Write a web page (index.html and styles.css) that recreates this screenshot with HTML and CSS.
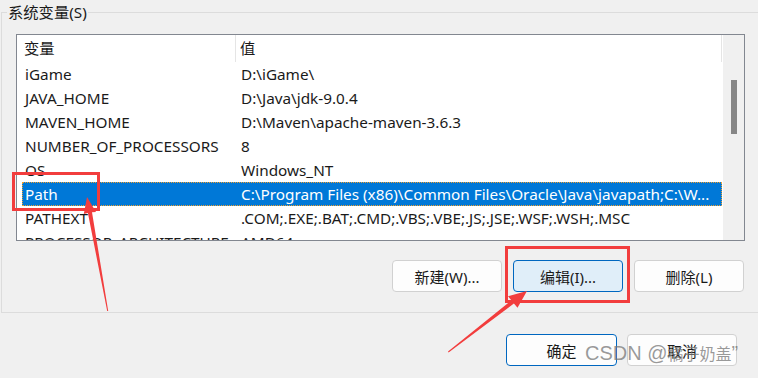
FILE: index.html
```html
<!DOCTYPE html>
<html lang="zh-CN">
<head>
  <meta charset="UTF-8">
  <title>环境变量</title>
  <link rel="stylesheet" href="styles.css">
</head>
<body>
  <fieldset class="group">
    <legend>系统变量(S)</legend>
    <div class="listbox">
      <div class="list">
        <div class="list-head">
          <span class="col-name">变量</span>
          <span class="col-value">值</span>
        </div>
        <div class="row"><span class="col-name">iGame</span><span class="col-value">D:\iGame\</span></div>
        <div class="row"><span class="col-name">JAVA_HOME</span><span class="col-value">D:\Java\jdk-9.0.4</span></div>
        <div class="row"><span class="col-name">MAVEN_HOME</span><span class="col-value">D:\Maven\apache-maven-3.6.3</span></div>
        <div class="row"><span class="col-name">NUMBER_OF_PROCESSORS</span><span class="col-value">8</span></div>
        <div class="row"><span class="col-name">OS</span><span class="col-value">Windows_NT</span></div>
        <div class="row selected"><span class="col-name">Path</span><span class="col-value">C:\Program Files (x86)\Common Files\Oracle\Java\javapath;C:\W...</span></div>
        <div class="row"><span class="col-name">PATHEXT</span><span class="col-value">.COM;.EXE;.BAT;.CMD;.VBS;.VBE;.JS;.JSE;.WSF;.WSH;.MSC</span></div>
        <div class="row"><span class="col-name">PROCESSOR_ARCHITECTURE</span><span class="col-value">AMD64</span></div>
      </div>
      <div class="scrollbar"><div class="thumb"></div></div>
    </div>
    <div class="actions">
      <button class="btn">新建(W)...</button>
      <button class="btn active">编辑(I)...</button>
      <button class="btn">删除(L)</button>
    </div>
  </fieldset>

  <div class="dialog-actions">
    <button class="btn default">确定</button>
    <button class="btn">取消</button>
  </div>

  <!-- annotations drawn on top of the screenshot -->
  <svg class="marks" width="758" height="378" viewBox="0 0 758 378">
    <rect x="13.5" y="173.5" width="85" height="36" fill="none" stroke="#f23d3d" stroke-width="3"/>
    <rect x="506.5" y="247.5" width="122" height="54" fill="none" stroke="#f23d3d" stroke-width="3"/>
    <polygon fill="#f23d3d" points="87,197 96,212 92,212.3 108.2,311 107.2,311.1 87.9,213.1 83.8,214"/>
    <polygon fill="#f23d3d" points="527,291 517.5,307.8 513.9,303.6 448.6,352.4 448,351.6 511.5,300.4 508,296.2"/>
  </svg>
  <div class="watermark">CSDN @<span class="wm-cjk">橘子奶盖</span>”</div>
</body>
</html>
```

FILE: styles.css
```css
body {
  margin: 0;
  width: 758px;
  height: 378px;
  overflow: hidden;
  position: relative;
  background: #f0f0f0;
  color: #1a1a1a;
  font-family: "Noto Sans", "Noto Sans CJK SC", sans-serif;
  font-size: 15.3px;
}

.group {
  margin: 2px 0 0 1px;
  padding: 0 14px 20px 0;
  min-width: 0;
  border: 1px solid #dcdcdc;
  border-right: none;
}

.group legend {
  margin-left: 5px;
  padding: 0 1px;
  line-height: 20px;
}

.listbox {
  display: flex;
  margin: 12px 0 0 14px;
  width: 729px;
  height: 207px;
  box-sizing: border-box;
  border: 1px solid #828790;
  background: #fff;
}

.list {
  flex: 1;
  padding: 0 1px 0 5px;
  overflow: hidden;
}

.list-head {
  display: flex;
  height: 27px;
  line-height: 27px;
}

.list-head .col-name {
  width: 214px;
  padding-left: 2px;
  box-sizing: border-box;
  border-right: 1px solid #e5e5e5;
}

.list-head .col-value {
  flex: 1;
  padding-left: 4px;
  border-right: 1px solid #e5e5e5;
}

.row {
  display: flex;
  height: 24px;
  line-height: 24px;
  white-space: nowrap;
}

.row .col-name {
  width: 216px;
  padding-left: 3px;
  box-sizing: border-box;
  overflow: hidden;
}

.row .col-value {
  flex: 1;
  padding-left: 3px;
  overflow: hidden;
}

.row.selected {
  background: #0078d7;
  color: #fff;
  outline: 1px dotted #f0a030;
  outline-offset: -1px;
}

.scrollbar {
  width: 21px;
  background: #f0f0f0;
}

.scrollbar .thumb {
  margin: 45px 0 0 8px;
  width: 6px;
  height: 54px;
  background: #868686;
}

.actions {
  display: flex;
  justify-content: flex-end;
  gap: 11px;
  margin-top: 19px;
}

.btn {
  width: 110px;
  height: 32px;
  border: 1px solid #d1d1d1;
  border-radius: 4px;
  background: #fdfdfd;
  color: #1a1a1a;
  font-family: inherit;
  font-size: 15px;
  padding: 0;
}

.btn.active {
  background: #e0eef9;
  border-color: #0067c0;
}

.btn.default {
  width: 111px;
  border-color: #0067c0;
}

.dialog-actions {
  display: flex;
  justify-content: flex-end;
  gap: 10px;
  margin-top: 21px;
  padding-right: 21px;
}

.marks {
  position: absolute;
  left: 0;
  top: 0;
}

.watermark {
  position: absolute;
  left: 585px;
  top: 340px;
  color: rgba(120, 120, 120, 0.75);
  font-size: 20px;
  line-height: 26px;
  white-space: nowrap;
  font-family: "Liberation Sans", "Noto Sans CJK SC", sans-serif;
}

.wm-cjk {
  font-size: 16px;
}
```
